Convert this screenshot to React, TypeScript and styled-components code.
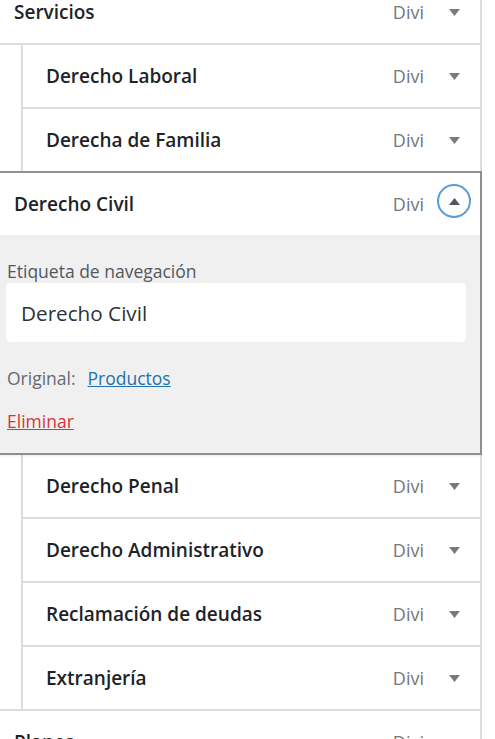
import React from 'react';
import styled, { createGlobalStyle } from 'styled-components';

const GlobalStyle = createGlobalStyle`
  html, body { margin: 0; padding: 0; background: #fff; }
  body { font-family: 'Open Sans', 'Noto Sans', sans-serif; overflow: hidden; }
`;

const Page = styled.div`
  width: 482px;
  margin-top: -21px;
  display: flex;
  flex-direction: column;
`;

const Row = styled.div<{ $nested?: boolean }>`
  display: flex;
  align-items: center;
  box-sizing: border-box;
  height: 66px;
  margin-top: -2px;
  margin-left: ${(p) => (p.$nested ? '21px' : '0')};
  border: 2px solid #dcdcde;
  border-left: ${(p) => (p.$nested ? '2px solid #dcdcde' : 'none')};
  padding: 0 9px 0 ${(p) => (p.$nested ? '23px' : '14px')};
  background: #fff;
  &:first-child { margin-top: 0; }
`;

const Title = styled.span`
  flex: 1;
  font-size: 19px;
  font-weight: 600;
  color: #1d2327;
  white-space: nowrap;
`;

const Type = styled.span`
  font-size: 18px;
  color: #72777c;
  margin-right: 13px;
`;

const Toggle = styled.span<{ $open?: boolean }>`
  box-sizing: border-box;
  width: 34px;
  height: 34px;
  border-radius: 50%;
  border: 2px solid ${(p) => (p.$open ? '#5b9dd9' : 'transparent')};
  display: flex;
  align-items: center;
  justify-content: center;
  margin-bottom: ${(p) => (p.$open ? '6px' : '0')};
`;

const OpenItem = styled.div`
  position: relative;
  z-index: 1;
  margin-top: -2px;
  border: 2px solid #8c8f94;
  border-left: none;
  background: #f0f0f0;
  box-shadow: 0 1px 2px rgba(0, 0, 0, 0.07);
`;

const OpenHeader = styled.div`
  display: flex;
  align-items: center;
  height: 62px;
  background: #fff;
  padding: 0 9px 0 14px;
`;

const Panel = styled.div`
  box-sizing: border-box;
  height: 218px;
  padding: 25px 14px 0 6px;
  display: flex;
  flex-direction: column;
`;

const Label = styled.div`
  font-size: 17.5px;
  line-height: 23px;
  color: #50575e;
  padding-left: 1px;
`;

const FieldBox = styled.div`
  box-sizing: border-box;
  width: 460px;
  height: 59px;
  border-radius: 5px;
  background: #fff;
  display: flex;
  align-items: center;
  padding-left: 15px;
  font-size: 20.7px;
  color: #2c3338;
`;

const Meta = styled.div<{ $gap: number }>`
  margin-top: ${(p) => p.$gap}px;
  font-size: 17.5px;
  line-height: 23px;
  color: #646970;
  padding-left: 1px;
`;

const Link = styled.a<{ $danger?: boolean }>`
  color: ${(p) => (p.$danger ? '#d63638' : '#2271b1')};
  text-decoration: underline;
  margin-left: ${(p) => (p.$danger ? '0' : '12px')};
  cursor: pointer;
`;

const Arrow = ({ up }: { up?: boolean }) => (
  <svg width="11" height="7" viewBox="0 0 11 7">
    <path d={up ? 'M0 7h11L5.5 0z' : 'M0 0h11L5.5 7z'} fill={up ? '#50575e' : '#787c82'} />
  </svg>
);

type Item = { title: string; nested?: boolean };

const before: Item[] = [
  { title: 'Servicios' },
  { title: 'Derecho Laboral', nested: true },
  { title: 'Derecha de Familia', nested: true },
];

const after: Item[] = [
  { title: 'Derecho Penal', nested: true },
  { title: 'Derecho Administrativo', nested: true },
  { title: 'Reclamación de deudas', nested: true },
  { title: 'Extranjería', nested: true },
  { title: 'Planes' },
];

const MenuRow = ({ item }: { item: Item }) => (
  <Row $nested={item.nested}>
    <Title>{item.title}</Title>
    <Type>Divi</Type>
    <Toggle>
      <Arrow />
    </Toggle>
  </Row>
);

export default function App() {
  return (
    <>
      <GlobalStyle />
      <Page>
        {before.map((it) => (
          <MenuRow key={it.title} item={it} />
        ))}
        <OpenItem>
          <OpenHeader>
            <Title>Derecho Civil</Title>
            <Type>Divi</Type>
            <Toggle $open>
              <Arrow up />
            </Toggle>
          </OpenHeader>
          <Panel>
            <Label>Etiqueta de navegación</Label>
            <FieldBox>Derecho Civil</FieldBox>
            <Meta $gap={25}>
              Original:<Link>Productos</Link>
            </Meta>
            <Meta $gap={20}>
              <Link $danger>Eliminar</Link>
            </Meta>
          </Panel>
        </OpenItem>
        {after.map((it) => (
          <MenuRow key={it.title} item={it} />
        ))}
      </Page>
    </>
  );
}
